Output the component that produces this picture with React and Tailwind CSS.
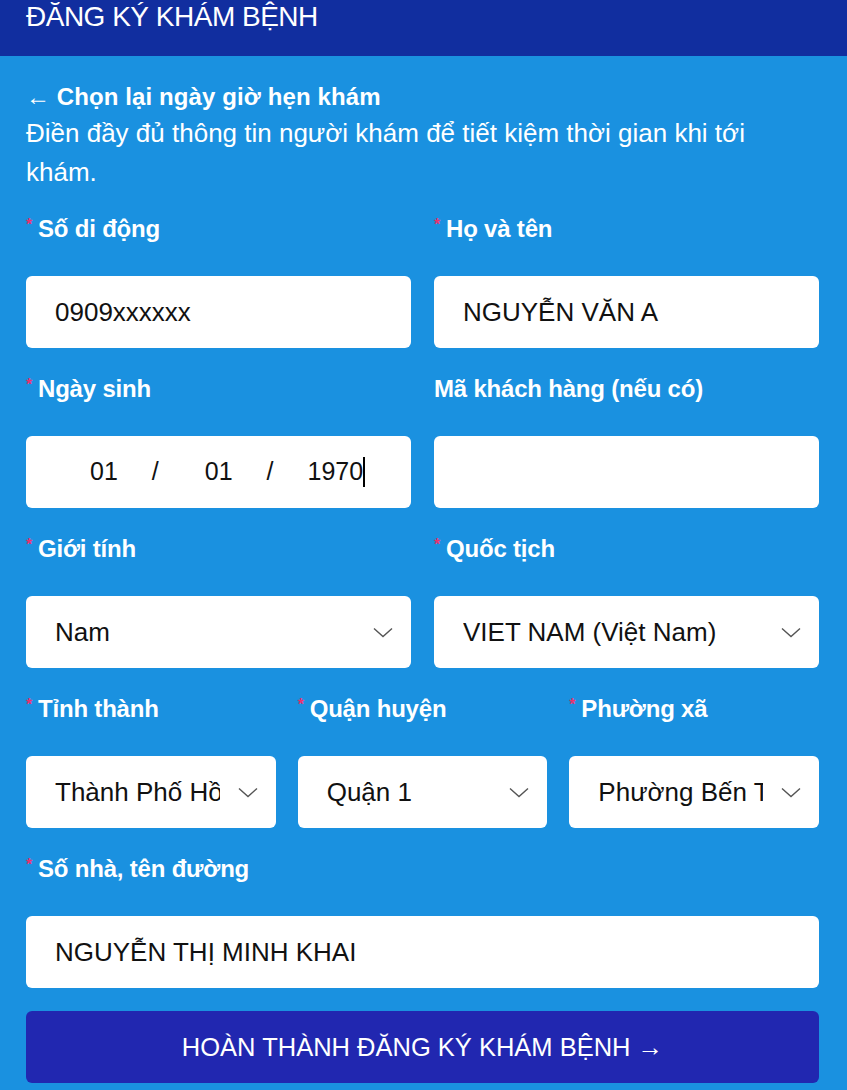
import React from 'react';

const font = { fontFamily: '"Liberation Sans", Arial, sans-serif' };

function Label({ text, required = true }) {
  return (
    <div className="h-[38px] leading-[38px] text-[24px] font-bold text-white tracking-[-0.2px] whitespace-nowrap">
      {required && <span className="text-[#e8336f] text-[16px] align-top relative top-[-4px] mr-[6px]">*</span>}
      {text}
    </div>
  );
}

function Chevron() {
  return (
    <svg width="20" height="11" viewBox="0 0 20 11" fill="none" className="shrink-0">
      <path d="M1 1.5 L10 9.5 L19 1.5" stroke="#555" strokeWidth="1.4" />
    </svg>
  );
}

function Box({ children, select, pl = 'pl-[29px]' }) {
  return (
    <div className={`h-[72px] bg-white rounded-[6px] flex items-center ${pl} ${select ? 'pr-[18px]' : 'pr-4'} text-[26px] text-[#111] overflow-hidden`}>
      <div className={`flex-1 min-w-0 whitespace-nowrap overflow-hidden ${select ? 'mr-[18px]' : ''}`}>{children}</div>
      {select && <Chevron />}
    </div>
  );
}

function Field({ label, required, children, select, pl }) {
  return (
    <div className="flex flex-col">
      <Label text={label} required={required} />
      <div className="h-[28px]" />
      <Box select={select} pl={pl}>{children}</Box>
    </div>
  );
}

export default function App() {
  return (
    <div className="w-[847px] h-[1090px] bg-[#1a91e0] overflow-hidden" style={font}>
      <div className="h-[56px] bg-[#112e9f] px-[26px]">
        <div className="text-white text-[28px] leading-[34px] tracking-[-0.5px]">ĐĂNG KÝ KHÁM BỆNH</div>
      </div>
      <div className="pl-[26px] pr-[28px] pt-[23px]">
        <div className="text-white text-[24px] font-bold leading-[35px] tracking-[0.1px]">← Chọn lại ngày giờ hẹn khám</div>
        <div className="text-white text-[26px] leading-[39px] max-w-[750px]">
          Điền đầy đủ thông tin người khám để tiết kiệm thời gian khi tới khám.
        </div>
        <div className="grid grid-cols-2 gap-x-[23px] gap-y-[22px] mt-[18px]">
          <Field label="Số di động">0909xxxxxx</Field>
          <Field label="Họ và tên">NGUYỄN VĂN A</Field>
          <Field label="Ngày sinh" pl="pl-0">
            <div className="flex items-center pl-[64px] text-[25px]">
              <span>01</span>
              <span className="ml-[34px]">/</span>
              <span className="ml-[46px]">01</span>
              <span className="ml-[34px]">/</span>
              <span className="ml-[34px]">1970</span>
              <span className="inline-block w-[2px] h-[30px] bg-black" />
            </div>
          </Field>
          <Field label="Mã khách hàng (nếu có)" required={false}>{''}</Field>
          <Field label="Giới tính" select>Nam</Field>
          <Field label="Quốc tịch" select>VIET NAM (Việt Nam)</Field>
        </div>
        <div className="grid grid-cols-3 gap-x-[22px] mt-[22px]">
          <Field label="Tỉnh thành" select>Thành Phố Hồ Chí Minh</Field>
          <Field label="Quận huyện" select>Quận 1</Field>
          <Field label="Phường xã" select>Phường Bến Thành</Field>
        </div>
        <div className="mt-[22px]">
          <Field label="Số nhà, tên đường">NGUYỄN THỊ MINH KHAI</Field>
        </div>
        <button className="mt-[23px] w-full h-[72px] rounded-[6px] bg-[#2127b0] text-white text-[25.5px]" style={font}>
          HOÀN THÀNH ĐĂNG KÝ KHÁM BỆNH →
        </button>
      </div>
    </div>
  );
}
